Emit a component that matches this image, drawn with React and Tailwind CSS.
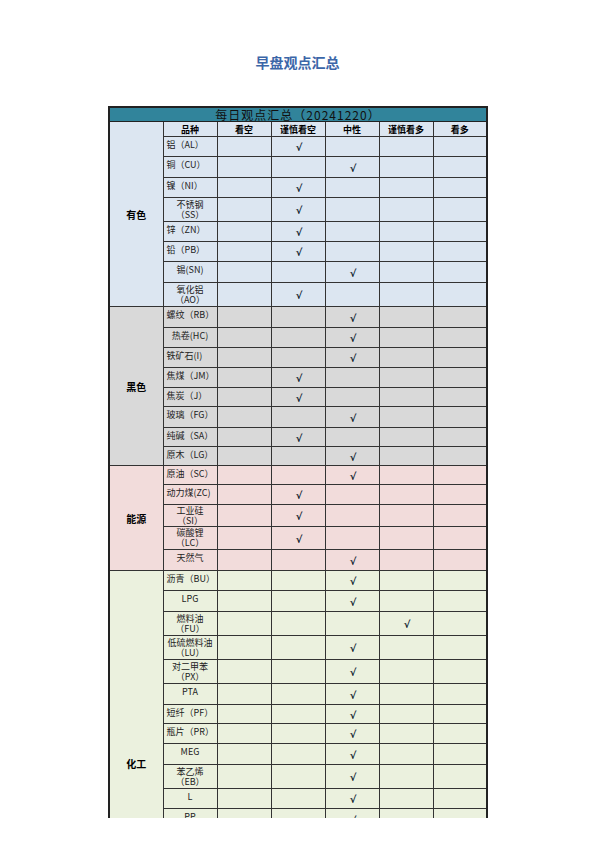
import React from 'react';

const COLS = ['看空', '谨慎看空', '中性', '谨慎看多', '看多'];

// each item: [name, height class, align, check column index]
const GROUPS = [
  {
    name: '有色',
    bg: 'bg-[#dce6f1]',
    rows: [
      ['铝（AL）', 'h-[20px]', 'left', 1],
      ['铜（CU）', 'h-[21px]', 'left', 2],
      ['镍（NI）', 'h-[20px]', 'left', 1],
      ['不锈钢\n（SS）', 'h-[24px]', 'center', 1],
      ['锌（ZN）', 'h-[20px]', 'left', 1],
      ['铅（PB）', 'h-[20px]', 'left', 1],
      ['锡(SN)', 'h-[21px]', 'center', 2],
      ['氧化铝\n（AO）', 'h-[24px]', 'center', 1],
    ],
  },
  {
    name: '黑色',
    bg: 'bg-[#d9d9d9]',
    rows: [
      ['螺纹（RB）', 'h-[21px]', 'left', 2],
      ['热卷(HC)', 'h-[20px]', 'center', 2],
      ['铁矿石(I)', 'h-[20px]', 'left', 2],
      ['焦煤（JM）', 'h-[20px]', 'left', 1],
      ['焦炭（J）', 'h-[19px]', 'left', 1],
      ['玻璃（FG）', 'h-[21px]', 'left', 2],
      ['纯碱（SA）', 'h-[19px]', 'left', 1],
      ['原木（LG）', 'h-[19px]', 'left', 2],
    ],
  },
  {
    name: '能源',
    bg: 'bg-[#f2dcdb]',
    rows: [
      ['原油（SC）', 'h-[19px]', 'left', 2],
      ['动力煤(ZC)', 'h-[20px]', 'left', 1],
      ['工业硅\n（SI）', 'h-[22px]', 'center', 1],
      ['碳酸锂\n（LC）', 'h-[23px]', 'center', 1],
      ['天然气', 'h-[21px]', 'center', 2],
    ],
  },
  {
    name: '化工',
    bg: 'bg-[#ebf1de]',
    rows: [
      ['沥青（BU）', 'h-[20px]', 'left', 2],
      ['LPG', 'h-[21px]', 'center', 2],
      ['燃料油\n（FU）', 'h-[24px]', 'center', 3],
      ['低硫燃料油\n（LU）', 'h-[24px]', 'center', 2],
      ['对二甲苯\n（PX）', 'h-[24px]', 'center', 2],
      ['PTA', 'h-[21px]', 'center', 2],
      ['短纤（PF）', 'h-[19px]', 'left', 2],
      ['瓶片（PR）', 'h-[20px]', 'left', 2],
      ['MEG', 'h-[21px]', 'center', 2],
      ['苯乙烯\n（EB）', 'h-[24px]', 'center', 2],
      ['L', 'h-[20px]', 'center', 2],
      ['PP', 'h-[22px]', 'center', 2],
      // the group runs on past the page edge
      ['', 'h-[21px]', 'center', -1],
      ['', 'h-[21px]', 'center', -1],
      ['', 'h-[21px]', 'center', -1],
      ['', 'h-[21px]', 'center', -1],
      ['', 'h-[21px]', 'center', -1],
      ['', 'h-[21px]', 'center', -1],
    ],
  },
];

function Check() {
  return (
    <span className="inline-block translate-x-[1px] translate-y-[1px] font-['DejaVu_Sans',sans-serif] text-[10px] font-bold leading-none text-[#0d1a2e]">
      √
    </span>
  );
}

export default function App() {
  return (
    <div className="h-[818px] w-[595px] overflow-hidden bg-white font-['Noto_Sans_CJK_SC',sans-serif] text-black">
      {/* page title */}
      <div className="pt-[52px] text-center text-[14px] font-bold leading-[20px] text-[#3b66a8]">早盘观点汇总</div>

      <div className="mt-[34px] pl-[108px]">
        <table className="table-fixed border-collapse border-2 border-[#222] text-[9px] leading-[11px]">
          <colgroup>
            <col className="w-[54px]" />
            <col className="w-[54px]" />
            {COLS.map((c) => (
              <col key={c} className="w-[54px]" />
            ))}
          </colgroup>
          <tbody>
            {/* table title row */}
            <tr className="h-[14px]">
              <td colSpan={7} className="border border-[#222] bg-[#31849b] text-center text-[12px] leading-[13px] tracking-[1px] text-[#111]">
                每日观点汇总（20241220）
              </td>
            </tr>

            {GROUPS.map((g, gi) => (
              <React.Fragment key={g.name}>
                {gi === 0 && (
                  <tr className="h-[15px]">
                    <td rowSpan={g.rows.length + 1} className={`border border-[#333] ${g.bg} text-center text-[10px] font-bold`}>
                      {g.name}
                    </td>
                    <td className="border border-[#333] bg-[#dce6f1] text-center font-bold">品种</td>
                    {COLS.map((c) => (
                      <td key={c} className="border border-[#333] bg-[#dce6f1] text-center font-bold">
                        {c}
                      </td>
                    ))}
                  </tr>
                )}
                {g.rows.map(([name, h, align, chk], ri) => (
                  <tr key={g.name + ri} className={h}>
                    {gi !== 0 && ri === 0 && (
                      <td rowSpan={g.rows.length} className={`border border-[#333] ${g.bg} text-center text-[10px] font-bold`}>
                        {g.name}
                      </td>
                    )}
                    <td
                      className={`border border-[#333] ${g.bg} whitespace-pre-line px-[3px] ${
                        name.includes('\n') ? 'align-middle leading-[10px]' : 'align-top pt-[2px]'
                      } ${align === 'left' ? 'text-left' : 'text-center'} text-[#222]`}
                    >
                      {name}
                    </td>
                    {COLS.map((c, ci) => (
                      <td key={c} className={`border border-[#333] ${g.bg} text-center align-middle`}>
                        {ci === chk && <Check />}
                      </td>
                    ))}
                  </tr>
                ))}
              </React.Fragment>
            ))}
          </tbody>
        </table>
      </div>
    </div>
  );
}
